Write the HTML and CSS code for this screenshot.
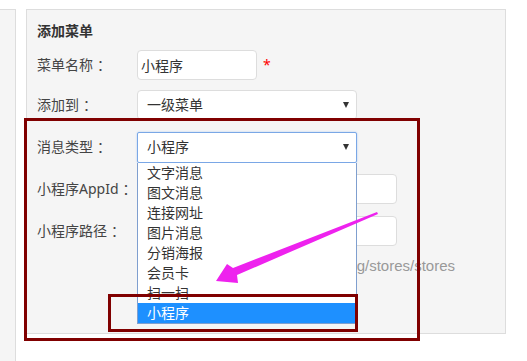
FILE: index.html
```html
<!DOCTYPE html>
<html lang="zh-CN">

<head>
    <meta charset="UTF-8" />
    <meta name="viewport" content="width=device-width, initial-scale=1.0" />
    <title>添加菜单</title>
    <link rel="stylesheet" href="styles.css">
</head>

<body>
    <div class="page">
        <div class="sidebar"></div>
        <div class="panel">
            <h3 class="panel-title">添加菜单</h3>

            <div class="form-row first">
                <label class="form-label">菜单名称<span class="colon">：</span></label>
                <input class="text-input short" type="text" value="小程序" />
                <span class="required">*</span>
            </div>

            <div class="form-row">
                <label class="form-label">添加到<span class="colon">：</span></label>
                <div class="select-box">
                    <span>一级菜单</span>
                    <i class="caret"></i>
                </div>
            </div>

            <div class="form-row">
                <label class="form-label">消息类型<span class="colon">：</span></label>
                <div class="select-wrap">
                    <div class="select-box focused">
                        <span>小程序</span>
                        <i class="caret"></i>
                    </div>
                    <ul class="select-menu">
                        <li>文字消息</li>
                        <li>图文消息</li>
                        <li>连接网址</li>
                        <li>图片消息</li>
                        <li>分销海报</li>
                        <li>会员卡</li>
                        <li>扫一扫</li>
                        <li class="active">小程序</li>
                    </ul>
                </div>
            </div>

            <div class="form-row">
                <label class="form-label">小程序AppId<span class="colon">：</span></label>
                <input class="text-input long" type="text" />
            </div>

            <div class="form-row">
                <label class="form-label">小程序路径<span class="colon">：</span></label>
                <input class="text-input long" type="text" />
            </div>

            <p class="help-text">例如：pages/shopping/stores/stores</p>
        </div>
    </div>

    <!-- annotations drawn over the screenshot -->
    <div class="mark mark-outer"></div>
    <div class="mark mark-inner"></div>
    <svg class="arrow" width="527" height="361" viewBox="0 0 527 361">
        <polygon points="377,212 378,214 237,275 238,283 216,281 227,264 233,268" fill="#ee22ee" />
    </svg>
</body>

</html>
```

FILE: styles.css
```css
body {
    margin: 0;
    font-family: "Noto Sans", "Noto Sans CJK SC", sans-serif;
    font-size: 14px;
    color: #333;
    background-color: #fff;
}

.page {
    display: flex;
    align-items: flex-start;
    padding-top: 9px;
}

.sidebar {
    width: 15px;
    height: 352px;
    background: #f5f5f5;
    border-top: 1px solid #ddd;
    border-right: 1px solid #ddd;
}

.panel {
    box-sizing: border-box;
    width: 480px;
    height: 325px;
    margin-left: 10px;
    padding: 11px 10px 0;
    background: #f5f5f5;
    border: 1px solid #ddd;
}

.panel-title {
    margin: 0 0 9px;
    font-size: 14px;
    line-height: 20px;
    font-weight: bold;
    color: #333;
}

.form-row {
    display: flex;
    align-items: center;
    height: 30px;
    margin-bottom: 12px;
}

.form-row.first {
    margin-bottom: 10px;
}

.form-label {
    width: 100px;
    flex-shrink: 0;
    line-height: 20px;
    color: #444;
}

.colon {
    margin-left: 4px;
}

.text-input {
    box-sizing: border-box;
    height: 30px;
    padding: 0 3px;
    font-family: inherit;
    font-size: 14px;
    color: #333;
    background: #fff;
    border: 1px solid #ddd;
    border-radius: 4px;
    outline: none;
}

.text-input.short {
    width: 120px;
}

.text-input.long {
    width: 260px;
}

.required {
    margin-left: 6px;
    color: #f00;
    font-size: 14px;
    line-height: 14px;
}

.select-wrap {
    position: relative;
}

.select-box {
    box-sizing: border-box;
    display: flex;
    align-items: center;
    justify-content: space-between;
    width: 220px;
    height: 30px;
    padding: 0 7px 0 9px;
    background: #fff;
    border: 1px solid #ddd;
    border-radius: 4px;
    line-height: 20px;
}

.select-box.focused {
    height: 31px;
    border-color: #7aa7e6;
    border-radius: 2px;
    box-shadow: 0 0 2px #a9c8f2;
}

.caret {
    width: 0;
    height: 0;
    border-left: 3px solid transparent;
    border-right: 3px solid transparent;
    border-top: 6px solid #333;
}

.select-menu {
    position: absolute;
    top: 31px;
    left: 0;
    z-index: 2;
    box-sizing: border-box;
    width: 220px;
    margin: 0;
    padding: 0;
    list-style: none;
    background: #fff;
    border: 1px solid #7f9fcf;
    border-top: none;
}

.select-menu li {
    height: 20px;
    padding-left: 9px;
    line-height: 20px;
    color: #333;
}

.select-menu li.active {
    background: #1e90ff;
    color: #fff;
}

.help-text {
    width: 318px;
    margin: -2px 0 0 100px;
    font-family: "Liberation Sans", "Noto Sans CJK SC", sans-serif;
    font-size: 15px;
    line-height: 20px;
    color: #999;
    text-align: right;
    white-space: nowrap;
}

.mark {
    position: absolute;
    border: 3px solid #800000;
    pointer-events: none;
}

.mark-outer {
    left: 24px;
    top: 118px;
    width: 390px;
    height: 217px;
}

.mark-inner {
    left: 108px;
    top: 294px;
    width: 244px;
    height: 32px;
    z-index: 3;
}

.arrow {
    position: absolute;
    left: 0;
    top: 0;
    z-index: 4;
    pointer-events: none;
}
```
